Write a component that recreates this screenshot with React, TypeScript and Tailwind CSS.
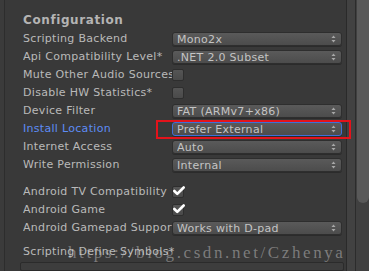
import { Check } from "lucide-react";

type Row =
  | { label: string; kind: "select"; value: string; active?: boolean }
  | { label: string; kind: "check"; checked: boolean };

const topRows: Row[] = [
  { label: "Scripting Backend", kind: "select", value: "Mono2x" },
  { label: "Api Compatibility Level*", kind: "select", value: ".NET 2.0 Subset" },
  { label: "Mute Other Audio Sources", kind: "check", checked: false },
  { label: "Disable HW Statistics*", kind: "check", checked: false },
  { label: "Device Filter", kind: "select", value: "FAT (ARMv7+x86)" },
  { label: "Install Location", kind: "select", value: "Prefer External", active: true },
  { label: "Internet Access", kind: "select", value: "Auto" },
  { label: "Write Permission", kind: "select", value: "Internal" },
];

const androidRows: Row[] = [
  { label: "Android TV Compatibility", kind: "check", checked: true },
  { label: "Android Game", kind: "check", checked: true },
  { label: "Android Gamepad Support Level", kind: "select", value: "Works with D-pad" },
];

const Arrows = () => (
  <svg width="5" height="8" viewBox="0 0 5 8" className="shrink-0">
    <path d="M2.5 0.5 L4.5 3 H0.5 Z" fill="#a8a8a8" />
    <path d="M2.5 7.5 L4.5 5 H0.5 Z" fill="#a8a8a8" />
  </svg>
);

const Select = ({ value, active }: { value: string; active?: boolean }) => (
  <div
    className={`flex h-[14px] w-[170px] items-center justify-between rounded-[3px] border pl-[4px] pr-[5px] bg-gradient-to-b from-[#5a5a5a] to-[#4c4c4c] shadow-[0_1px_0_#2b2b2b] ${
      active ? "border-[#3f6fd8]" : "border-[#2e2e2e]"
    }`}
  >
    <span className="truncate text-[11px] leading-none text-[#c4c4c4] tracking-[0.3px]">{value}</span>
    <Arrows />
  </div>
);

const CheckBox = ({ checked }: { checked: boolean }) => (
  <div className="relative h-[12px] w-[12px] rounded-[2px] border border-[#2e2e2e] bg-gradient-to-b from-[#555555] to-[#4a4a4a]">
    {checked && (
      <Check className="absolute -left-[1px] -top-[3px] h-[14px] w-[14px] text-white" strokeWidth={4.5} />
    )}
  </div>
);

const FieldRow = ({ row }: { row: Row }) => {
  const isBlue = row.kind === "select" && row.active;
  return (
    <div className="flex h-[18px] items-center">
      <div
        className={`w-[149px] shrink-0 overflow-hidden whitespace-nowrap text-[11px] tracking-[0.3px] ${
          isBlue ? "text-[#5d8cf5]" : "text-[#b9b9b9]"
        }`}
      >
        {row.label}
      </div>
      {row.kind === "select" ? <Select value={row.value} active={row.active} /> : <CheckBox checked={row.checked} />}
    </div>
  );
};

export default function App() {
  return (
    <div
      className="relative flex h-[271px] w-[369px] overflow-hidden bg-[#393939]"
      style={{ fontFamily: '"DejaVu Sans", "Liberation Sans", sans-serif' }}
    >
      {/* left gutter */}
      <div className="w-[4px] shrink-0 bg-[#3b3b3b]" />
      <div className="w-[1px] shrink-0 bg-[#2d2d2d]" />

      {/* inspector body */}
      <div className="flex flex-1 flex-col pt-[11px] pl-[18px]">
        <div className="flex h-[18px] items-center text-[12px] font-bold tracking-[0.6px] text-[#b4b4b4]">
          Configuration
        </div>
        <div className="mt-[1px] flex flex-col">
          {topRows.map((r) => (
            <FieldRow key={r.label} row={r} />
          ))}
        </div>
        <div className="mt-[9px] flex flex-col">
          {androidRows.map((r) => (
            <FieldRow key={r.label} row={r} />
          ))}
        </div>
        <div className="mt-[7px] flex h-[18px] items-center text-[11px] tracking-[0.3px] text-[#b9b9b9]">
          Scripting Define Symbols*
        </div>
        <div className="mt-[1px] -ml-[3px] h-[20px] w-[324px] rounded-[2px] border border-[#2b2b2b] bg-[#3d3d3d]" />
      </div>

      {/* right edge / scrollbar */}
      <div className="w-[1px] shrink-0 bg-[#2a2a2a]" />
      <div className="w-[8px] shrink-0 bg-[#424242]" />
      <div className="w-[1px] shrink-0 bg-[#2c2c2c]" />
      <div className="relative w-[13px] shrink-0 bg-[#404040]">
        <div className="absolute left-[1px] right-0 top-0 h-[203px] rounded-b-[6px] bg-[#595959]" />
      </div>

      {/* red highlight around Install Location */}
      <div className="pointer-events-none absolute left-[156px] top-[120px] h-[19px] w-[195px] border-2 border-[#e3131b]" />

      {/* watermark */}
      <div
        className="pointer-events-none absolute left-[68px] top-[240px] whitespace-nowrap text-[17px] tracking-[2.6px] text-[#d0d0d0]/45"
        style={{ fontFamily: '"Liberation Serif", "DejaVu Serif", serif' }}
      >
        https://blog.csdn.net/Czhenya
      </div>
    </div>
  );
}
